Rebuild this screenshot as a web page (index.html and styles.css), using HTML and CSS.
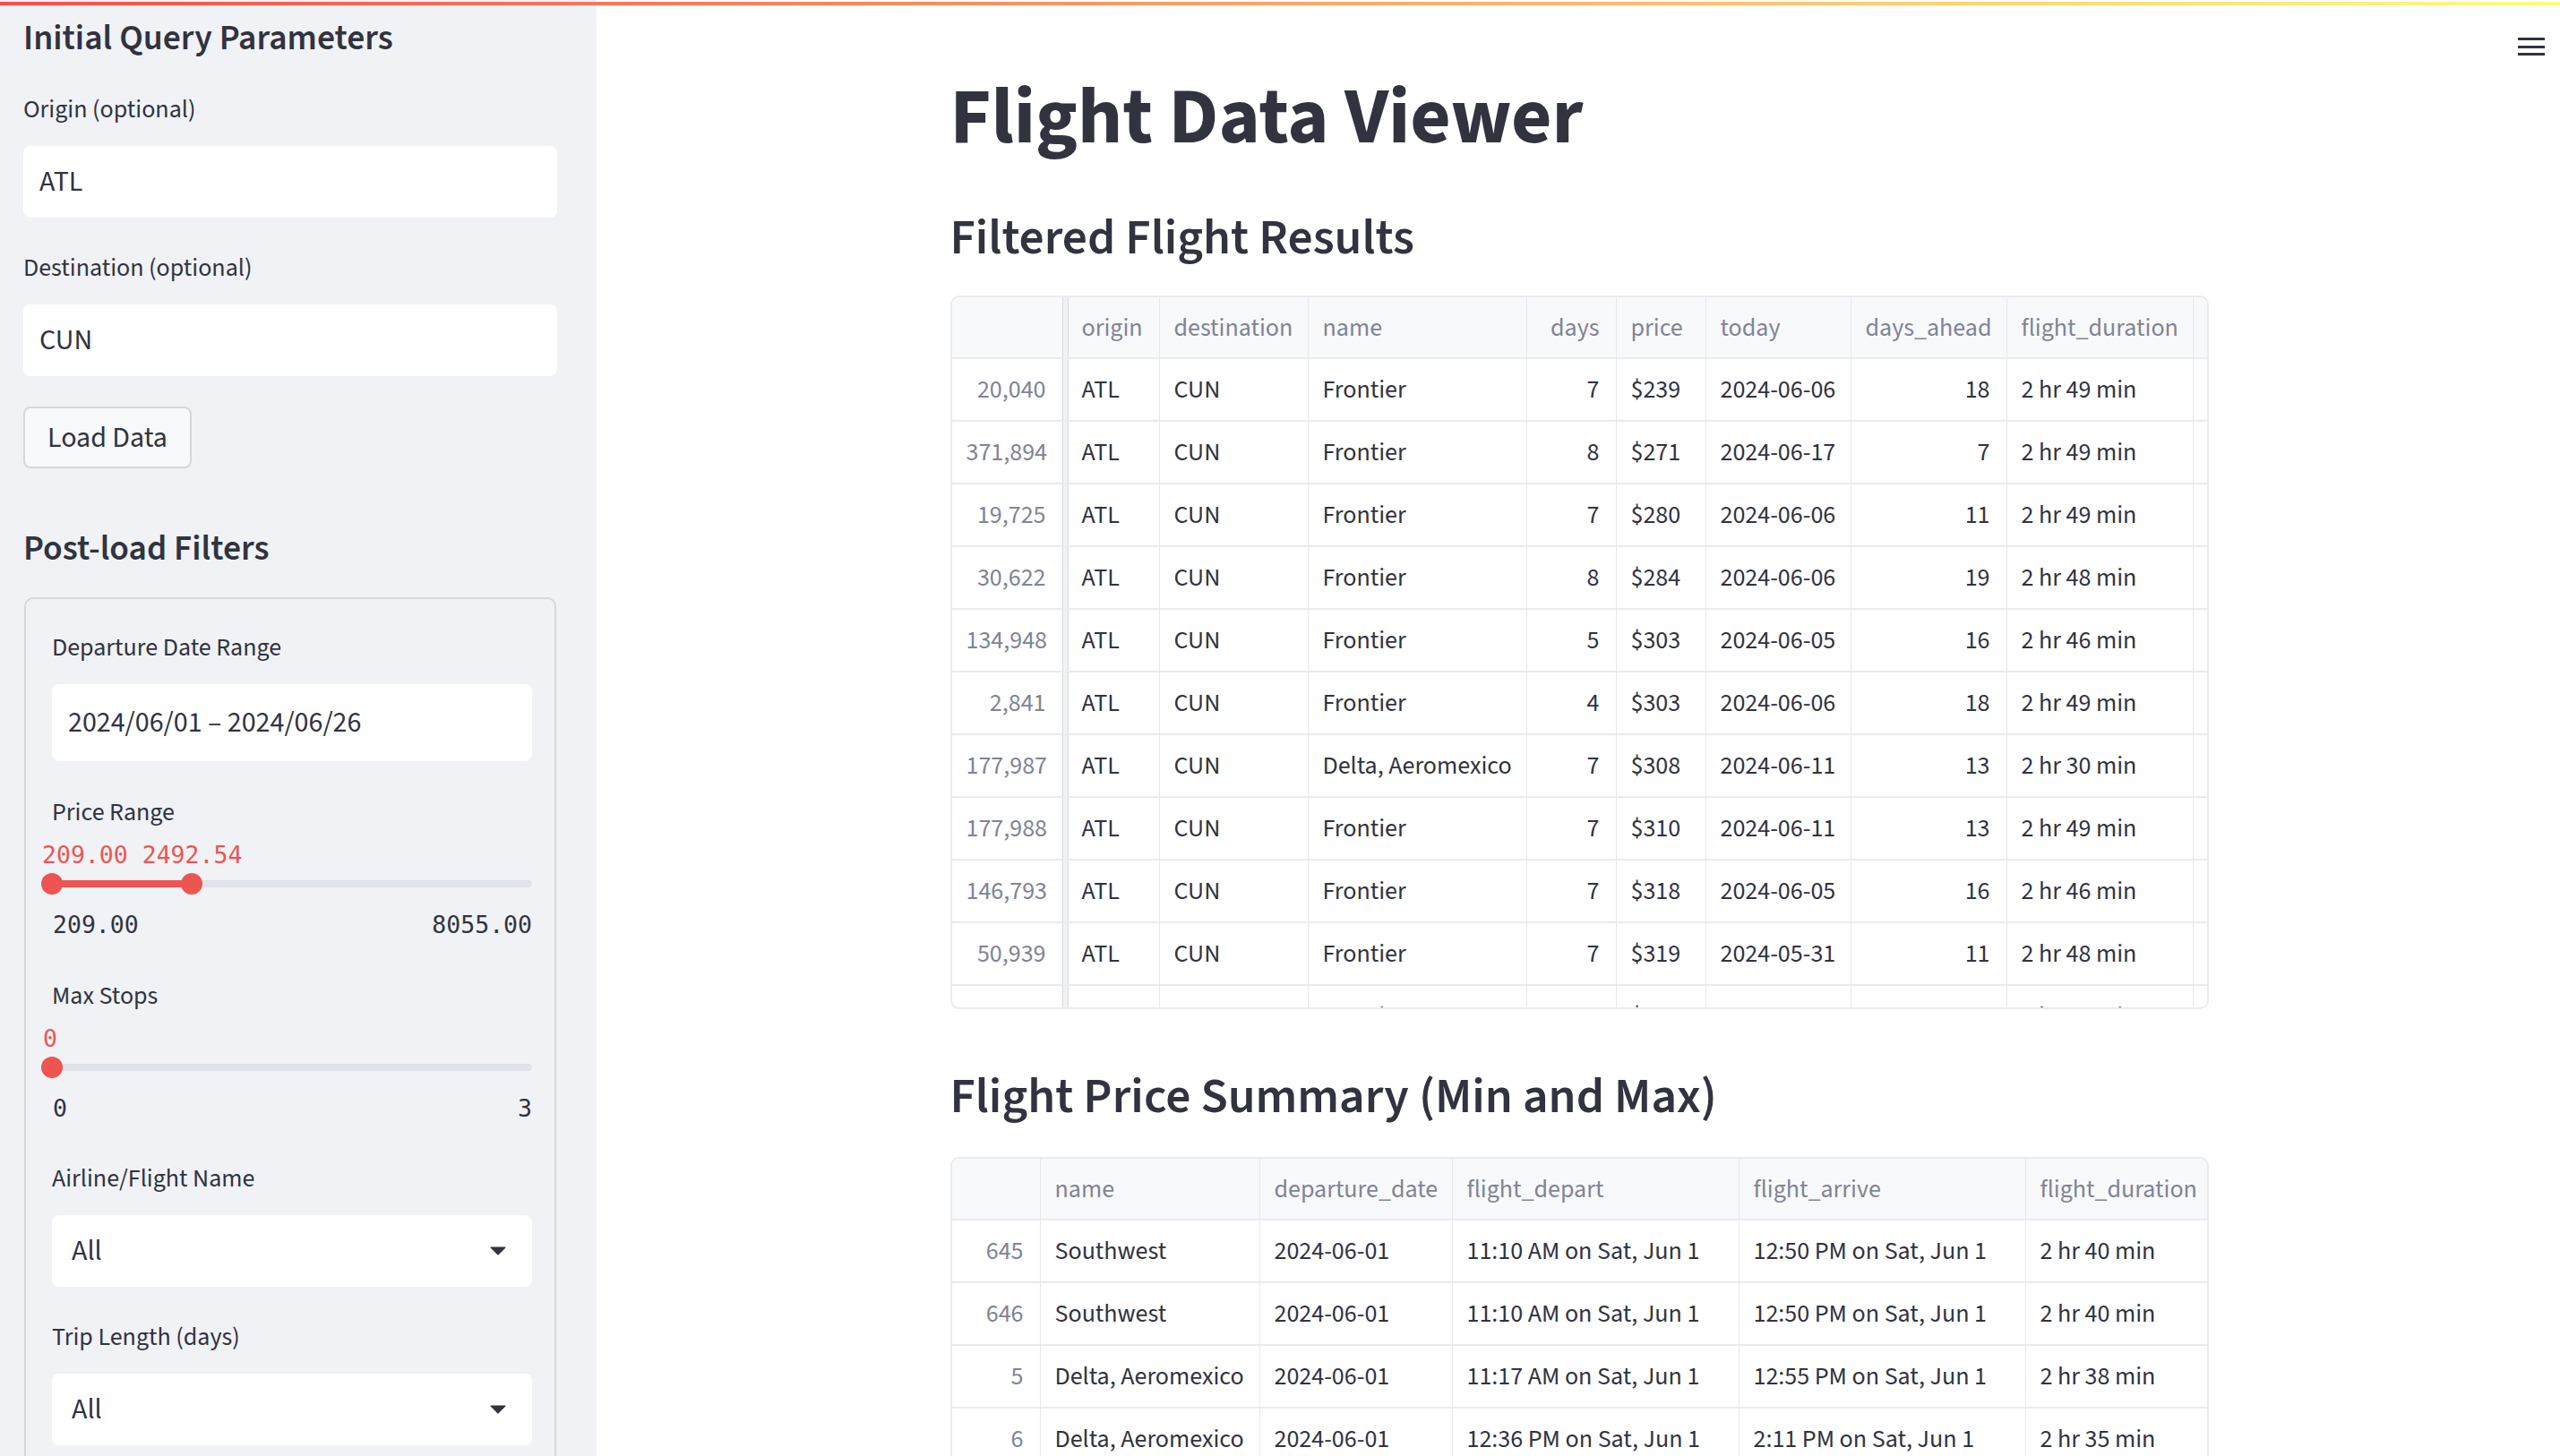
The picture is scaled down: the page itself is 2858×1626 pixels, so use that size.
FILE: index.html
```html
<!DOCTYPE html>
<html lang="en">
<head>
<meta charset="utf-8">
<title>Flight Data Viewer</title>
<link rel="stylesheet" href="styles.css">
</head>
<body>
<div class="decoration"></div>
<div class="app">
  <aside class="sidebar">
    <h2 class="side-h">Initial Query Parameters</h2>
    <div class="field first">
      <label class="lbl">Origin (optional)</label>
      <input class="text-input" type="text" value="ATL">
    </div>
    <div class="field">
      <label class="lbl">Destination (optional)</label>
      <input class="text-input" type="text" value="CUN">
    </div>
    <button class="btn">Load Data</button>

    <h2 class="side-h second">Post-load Filters</h2>
    <div class="box">
      <div class="field">
        <label class="lbl">Departure Date Range</label>
        <input class="text-input date-input" type="text" value="2024/06/01 – 2024/06/26">
      </div>
      <div class="slider">
        <label class="lbl">Price Range</label>
        <div class="vals">209.00 2492.54</div>
        <div class="track">
          <div class="fill" style="left:0%;width:29.1%"></div>
          <span class="thumb" style="left:0%"></span>
          <span class="thumb" style="left:29.1%"></span>
        </div>
        <div class="minmax"><span>209.00</span><span>8055.00</span></div>
      </div>
      <div class="slider wide">
        <label class="lbl">Max Stops</label>
        <div class="vals single">0</div>
        <div class="track">
          <span class="thumb" style="left:0%"></span>
        </div>
        <div class="minmax"><span>0</span><span>3</span></div>
      </div>
      <div class="field wide">
        <label class="lbl">Airline/Flight Name</label>
        <div class="select"><span>All</span>
          <svg class="caret" width="18" height="10" viewBox="0 0 18 10"><path d="M1 0.5 H17 a0.6 0.6 0 0 1 0.4 1 L9.4 9.4 a0.6 0.6 0 0 1 -0.8 0 L0.6 1.5 A0.6 0.6 0 0 1 1 0.5 Z" fill="#31333f"/></svg>
        </div>
      </div>
      <div class="field">
        <label class="lbl">Trip Length (days)</label>
        <div class="select"><span>All</span>
          <svg class="caret" width="18" height="10" viewBox="0 0 18 10"><path d="M1 0.5 H17 a0.6 0.6 0 0 1 0.4 1 L9.4 9.4 a0.6 0.6 0 0 1 -0.8 0 L0.6 1.5 A0.6 0.6 0 0 1 1 0.5 Z" fill="#31333f"/></svg>
        </div>
      </div>
    </div>
  </aside>

  <main class="main">
    <button class="menu" aria-label="Main menu"><span></span><span></span><span></span></button>
    <div class="content">
      <h1 class="title">Flight Data Viewer</h1>
      <h2 class="sub">Filtered Flight Results</h2>
      <div class="grid g1">
        <table>
          <colgroup>
            <col class="w124"><col class="w108"><col class="w166"><col class="w244"><col class="w100"><col class="w100"><col class="w162"><col class="w174"><col class="w208"><col class="w15">
          </colgroup>
          <thead>
            <tr><th class="idx"></th><th class="pin">origin</th><th>destination</th><th>name</th><th class="num">days</th><th>price</th><th>today</th><th class="num">days_ahead</th><th>flight_duration</th><th class="clip">stops</th></tr>
          </thead>
          <tbody>
            <tr><td class="idx">20,040</td><td class="pin">ATL</td><td>CUN</td><td>Frontier</td><td class="num">7</td><td>$239</td><td>2024-06-06</td><td class="num">18</td><td>2 hr 49 min</td><td class="clip"></td></tr>
            <tr><td class="idx">371,894</td><td class="pin">ATL</td><td>CUN</td><td>Frontier</td><td class="num">8</td><td>$271</td><td>2024-06-17</td><td class="num">7</td><td>2 hr 49 min</td><td class="clip"></td></tr>
            <tr><td class="idx">19,725</td><td class="pin">ATL</td><td>CUN</td><td>Frontier</td><td class="num">7</td><td>$280</td><td>2024-06-06</td><td class="num">11</td><td>2 hr 49 min</td><td class="clip"></td></tr>
            <tr><td class="idx">30,622</td><td class="pin">ATL</td><td>CUN</td><td>Frontier</td><td class="num">8</td><td>$284</td><td>2024-06-06</td><td class="num">19</td><td>2 hr 48 min</td><td class="clip"></td></tr>
            <tr><td class="idx">134,948</td><td class="pin">ATL</td><td>CUN</td><td>Frontier</td><td class="num">5</td><td>$303</td><td>2024-06-05</td><td class="num">16</td><td>2 hr 46 min</td><td class="clip"></td></tr>
            <tr><td class="idx">2,841</td><td class="pin">ATL</td><td>CUN</td><td>Frontier</td><td class="num">4</td><td>$303</td><td>2024-06-06</td><td class="num">18</td><td>2 hr 49 min</td><td class="clip"></td></tr>
            <tr><td class="idx">177,987</td><td class="pin">ATL</td><td>CUN</td><td>Delta, Aeromexico</td><td class="num">7</td><td>$308</td><td>2024-06-11</td><td class="num">13</td><td>2 hr 30 min</td><td class="clip"></td></tr>
            <tr><td class="idx">177,988</td><td class="pin">ATL</td><td>CUN</td><td>Frontier</td><td class="num">7</td><td>$310</td><td>2024-06-11</td><td class="num">13</td><td>2 hr 49 min</td><td class="clip"></td></tr>
            <tr><td class="idx">146,793</td><td class="pin">ATL</td><td>CUN</td><td>Frontier</td><td class="num">7</td><td>$318</td><td>2024-06-05</td><td class="num">16</td><td>2 hr 46 min</td><td class="clip"></td></tr>
            <tr><td class="idx">50,939</td><td class="pin">ATL</td><td>CUN</td><td>Frontier</td><td class="num">7</td><td>$319</td><td>2024-05-31</td><td class="num">11</td><td>2 hr 48 min</td><td class="clip"></td></tr>
            <tr><td class="idx">19,724</td><td class="pin">ATL</td><td>CUN</td><td>Frontier</td><td class="num">7</td><td>$320</td><td>2024-06-06</td><td class="num">11</td><td>2 hr 49 min</td><td class="clip"></td></tr>
          </tbody>
        </table>
      </div>

      <h2 class="sub second">Flight Price Summary (Min and Max)</h2>
      <div class="grid g2">
        <table>
          <colgroup>
            <col class="w99"><col class="w245"><col class="w215"><col class="w320"><col class="w320"><col class="w202">
          </colgroup>
          <thead>
            <tr><th class="idx"></th><th>name</th><th>departure_date</th><th>flight_depart</th><th>flight_arrive</th><th class="last">flight_duration</th></tr>
          </thead>
          <tbody>
            <tr><td class="idx">645</td><td>Southwest</td><td>2024-06-01</td><td>11:10 AM on Sat, Jun 1</td><td>12:50 PM on Sat, Jun 1</td><td class="last">2 hr 40 min</td></tr>
            <tr><td class="idx">646</td><td>Southwest</td><td>2024-06-01</td><td>11:10 AM on Sat, Jun 1</td><td>12:50 PM on Sat, Jun 1</td><td class="last">2 hr 40 min</td></tr>
            <tr><td class="idx">5</td><td>Delta, Aeromexico</td><td>2024-06-01</td><td>11:17 AM on Sat, Jun 1</td><td>12:55 PM on Sat, Jun 1</td><td class="last">2 hr 38 min</td></tr>
            <tr><td class="idx">6</td><td>Delta, Aeromexico</td><td>2024-06-01</td><td>12:36 PM on Sat, Jun 1</td><td>2:11 PM on Sat, Jun 1</td><td class="last">2 hr 35 min</td></tr>
          </tbody>
        </table>
      </div>
    </div>
  </main>
</div>
</body>
</html>
```

FILE: styles.css
```css
* { box-sizing: border-box; }
html, body { margin: 0; padding: 0; }
body {
  font-family: "Source Sans Pro", "Source Sans 3", Lato, "Open Sans", sans-serif;
  color: #31333f;
  background: #ffffff;
  overflow: hidden;
}

.decoration {
  position: fixed;
  top: 2px;
  left: 0;
  right: 0;
  height: 4px;
  background: linear-gradient(90deg, #ff4b4b, #fffd80);
  z-index: 10;
}

.app {
  display: flex;
  height: 1626px;
  overflow: hidden;
}

/* ---------- sidebar ---------- */
.sidebar {
  flex: 0 0 666px;
  background: #f0f2f6;
  padding: 15px 44px 0 26px;
  overflow: hidden;
}
.side-h {
  margin: 0;
  font-size: 39.5px;
  line-height: 56px;
  font-weight: 600;
}
.side-h.second { margin-top: 62px; }

.field { margin-top: 37px; }
.field.first { margin-top: 32px; }
.field.wide { margin-top: 44px; }

.lbl {
  display: block;
  font-size: 28px;
  line-height: 38px;
  margin-bottom: 22px;
}

.text-input {
  display: block;
  width: 100%;
  height: 80px;
  border: 0;
  border-radius: 8px;
  background: #ffffff;
  padding: 0 18px;
  font-family: inherit;
  font-size: 32px;
  color: #31333f;
  outline: none;
}
.date-input { height: 86px; }

.btn {
  display: block;
  margin-top: 34px;
  height: 69px;
  padding: 0 25px;
  background: #f8f9fb;
  border: 2px solid #d5d7dd;
  border-radius: 8px;
  font-family: inherit;
  font-size: 32px;
  color: #31333f;
}

.box {
  margin: 26px 1px 0;
  border: 2px solid #d5d8de;
  border-radius: 10px;
  padding: 35px 25px 300px 29px;
}
.box > .field:first-child { margin-top: 0; }

.slider { margin-top: 38px; }
.slider.wide { margin-top: 45px; }
.slider .lbl { margin-bottom: 14px; }

.vals {
  margin-left: -11px;
  font-family: "DejaVu Sans Mono", "Liberation Mono", monospace;
  font-size: 26.5px;
  line-height: 30px;
  color: #ee5550;
  white-space: pre;
}
.vals.single { margin-left: -10px; margin-top: 2px; }

.track {
  position: relative;
  height: 24px;
  margin-top: 5px;
}
.track::before {
  content: "";
  position: absolute;
  left: 0;
  right: 0;
  top: 8px;
  height: 8px;
  border-radius: 4px;
  background: #dfe3ea;
}
.fill {
  position: absolute;
  top: 8px;
  height: 8px;
  background: #ee5550;
}
.thumb {
  position: absolute;
  top: 0;
  width: 24px;
  height: 24px;
  margin-left: -12px;
  border-radius: 50%;
  background: #ee5550;
}
.minmax {
  display: flex;
  justify-content: space-between;
  margin-top: 19px;
  padding-left: 1px;
  font-family: "DejaVu Sans Mono", "Liberation Mono", monospace;
  font-size: 26.5px;
  line-height: 30px;
}

.select {
  display: flex;
  align-items: center;
  justify-content: space-between;
  height: 80px;
  background: #ffffff;
  border-radius: 8px;
  padding: 0 29px 0 22px;
  font-size: 32px;
}
.caret { display: block; }

/* ---------- main ---------- */
.main {
  flex: 1;
  position: relative;
  overflow: hidden;
  padding-left: 2px;
}
.menu {
  position: absolute;
  top: 42px;
  right: 17px;
  width: 30px;
  height: 20px;
  padding: 0;
  border: 0;
  background: none;
  display: flex;
  flex-direction: column;
  justify-content: space-between;
}
.menu span {
  display: block;
  height: 3px;
  background: #31333f;
}

.content {
  width: 1405px;
  margin: 0 auto;
  padding-top: 82px;
}
.title {
  margin: 0;
  font-size: 88px;
  line-height: 100px;
  font-weight: 700;
}
.sub {
  margin: 49px 0 0;
  font-size: 55.5px;
  line-height: 70px;
  font-weight: 600;
}
.sub.second { margin-top: 63px; }

.grid {
  margin-top: 29px;
  border: 2px solid #e9ebee;
  border-radius: 10px;
  overflow: hidden;
}
.g1 { height: 797px; }
.g2 { margin-top: 32px; }

table {
  border-collapse: separate;
  border-spacing: 0;
  table-layout: fixed;
  width: 1401px;
  font-size: 28px;
}
th, td {
  padding: 0 16px;
  border-bottom: 2px solid #e9ebee;
  border-right: 1px solid #e6e8eb;
  white-space: nowrap;
  overflow: hidden;
  text-align: left;
  font-weight: 400;
}
thead tr { height: 69px; background: #f8f9fb; }
th { color: #808495; }
tbody tr { height: 70px; }

.num { text-align: right; padding-right: 18px; }
.idx { color: #808495; text-align: right; padding-right: 18px; }
.g1 .idx { border-right: 1px solid #d9dce1; }
.pin {
  border-left: 5px solid #f1f2f5;
  box-shadow: inset 1px 0 0 #d9dce1;
}
.clip { border-right: 0; padding-left: 15px; }
.last { border-right: 0; }

.w124 { width: 124px; }
.w108 { width: 108px; }
.w166 { width: 166px; }
.w244 { width: 244px; }
.w100 { width: 100px; }
.w162 { width: 162px; }
.w174 { width: 174px; }
.w208 { width: 208px; }
.w15  { width: 15px; }
.w99  { width: 99px; }
.w245 { width: 245px; }
.w215 { width: 215px; }
.w320 { width: 320px; }
.w202 { width: 202px; }
```
